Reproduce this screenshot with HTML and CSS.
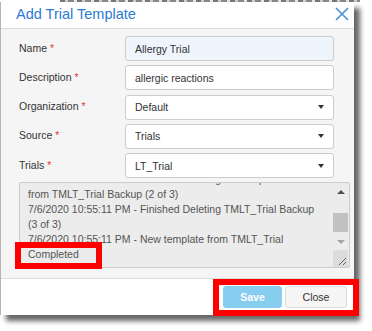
FILE: index.html
```html
<!DOCTYPE html>
<html lang="en">
<head>
    <meta charset="UTF-8">
    <title>Add Trial Template</title>
    <link rel="stylesheet" href="styles.css">
</head>
<body>
    <div class="bg-strip"></div>

    <!-- Dialog -->
    <div class="dialog">
        <div class="dialog-header">
            <h2>Add Trial Template</h2>
            <svg class="close-x" width="14" height="14" viewBox="0 0 14 14">
                <path d="M1 1 L13 13 M13 1 L1 13" stroke="#4a8fd8" stroke-width="1.6" fill="none"/>
            </svg>
        </div>

        <div class="dialog-body">
            <div class="form-grid">
                <label>Name <span class="req">*</span></label>
                <div class="field active">Allergy Trial</div>

                <label>Description <span class="req">*</span></label>
                <div class="field">allergic reactions</div>

                <label>Organization <span class="req">*</span></label>
                <div class="field select">Default <span class="caret"></span></div>

                <label>Source <span class="req">*</span></label>
                <div class="field select">Trials <span class="caret"></span></div>

                <label>Trials <span class="req">*</span></label>
                <div class="field select">LT_Trial <span class="caret"></span></div>
            </div>

            <!-- Progress log -->
            <div class="log-box">
                <div class="log-text">
                    <div>7/6/2020 10:55:11 PM - Finished Deleting the template</div>
                    <div>from TMLT_Trial Backup (2 of 3)</div>
                    <div>7/6/2020 10:55:11 PM - Finished Deleting TMLT_Trial Backup</div>
                    <div>(3 of 3)</div>
                    <div>7/6/2020 10:55:11 PM - New template from TMLT_Trial</div>
                    <div>Completed</div>
                </div>
                <div class="log-scroll">
                    <div class="sb-btn"><span class="arrow-up"></span></div>
                    <div class="sb-track"><div class="sb-thumb"></div></div>
                    <div class="sb-btn"><span class="arrow-down"></span></div>
                    <div class="sb-corner">
                        <svg width="15" height="17" viewBox="0 0 15 17">
                            <path d="M6 15 L13 8 M10 15 L13 12" stroke="#666" stroke-width="1" fill="none"/>
                        </svg>
                    </div>
                </div>
            </div>
        </div>

        <div class="dialog-footer">
            <button class="btn btn-save">Save</button>
            <button class="btn btn-close">Close</button>
        </div>
    </div>

    <!-- Annotation boxes -->
    <div class="mark mark-completed"></div>
    <div class="mark mark-buttons"></div>
</body>
</html>
```

FILE: styles.css
```css
/* Reset */
* {
    margin: 0;
    padding: 0;
    box-sizing: border-box;
}

body {
    font-family: "Liberation Sans", Arial, sans-serif;
    background-color: #fff;
    color: #333;
    width: 372px;
    height: 331px;
    overflow: hidden;
    position: relative;
}

.bg-strip {
    height: 2px;
    margin: 0 12px 0 60px;
    background: repeating-linear-gradient(90deg, #777 0 5px, #ccc 5px 8px, #888 8px 14px, #e5e5e5 14px 17px);
}

/* Dialog */
.dialog {
    width: 354px;
    background-color: #fff;
    border-left: 1px solid #b5b5b5;
    box-shadow: 6px 6px 5px rgba(0, 0, 0, 0.6);
}

.dialog-header {
    height: 27px;
    border-bottom: 1px solid #dcdcdc;
    display: flex;
    align-items: center;
    justify-content: space-between;
    padding: 0 5px 2px 15px;
}

.dialog-header h2 {
    font-size: 14.5px;
    font-weight: normal;
    color: #2a7bd1;
}

.dialog-body {
    background-color: #f5f5f5;
    padding: 7px 4px 10px 18px;
}

.form-grid {
    display: grid;
    grid-template-columns: 106px 209px;
    grid-auto-rows: 25px;
    row-gap: 4.25px;
}

.form-grid label {
    font-size: 10.5px;
    color: #333;
    display: flex;
    align-items: center;
    padding-bottom: 2px;
}

.req {
    color: #e53935;
    margin-left: 3px;
}

.field {
    background-color: #fff;
    border: 1px solid #ccc;
    border-radius: 3px;
    font-size: 10.5px;
    color: #333;
    padding: 0 9px;
    display: flex;
    align-items: center;
    justify-content: space-between;
}

.field.active {
    background-color: #eef5fd;
}

.caret {
    width: 0;
    height: 0;
    border-left: 3.5px solid transparent;
    border-right: 3.5px solid transparent;
    border-top: 4px solid #333;
}

/* Log box */
.log-box {
    margin-top: 4px;
    width: 331px;
    height: 86px;
    background-color: #ececec;
    border: 1px solid #ccc;
    border-radius: 2px;
    display: flex;
}

.log-text {
    flex: 1;
    overflow: hidden;
    padding-left: 8px;
    font-size: 10.5px;
    line-height: 15px;
    color: #555;
    white-space: nowrap;
}

.log-text div:first-child {
    margin-top: -11px;
}

.log-scroll {
    width: 15px;
    margin-right: 1px;
    display: flex;
    flex-direction: column;
}

.sb-btn {
    height: 16px;
    display: flex;
    align-items: center;
    justify-content: center;
}

.sb-btn:first-child {
    margin-top: 1px;
}

.arrow-up {
    border-left: 4px solid transparent;
    border-right: 4px solid transparent;
    border-bottom: 4px solid #505050;
}

.arrow-down {
    border-left: 4px solid transparent;
    border-right: 4px solid transparent;
    border-top: 4px solid #a3a3a3;
}

.sb-track {
    flex: 1;
    padding-top: 13px;
}

.sb-thumb {
    height: 19px;
    background-color: #c1c1c1;
}

.sb-corner {
    height: 17px;
    background-color: #dcdcdc;
}

.sb-corner svg {
    display: block;
}

/* Footer */
.dialog-footer {
    height: 37px;
    border-top: 1px solid #dcdcdc;
    display: flex;
    justify-content: flex-end;
    align-items: flex-start;
    gap: 3px;
    padding: 7px 7px 0 0;
}

.btn {
    height: 22px;
    border-radius: 3px;
    font-family: "Liberation Sans", Arial, sans-serif;
    font-size: 10.5px;
}

.btn-save {
    width: 59px;
    background-color: #87cdef;
    border: 1px solid #87cdef;
    color: #fff;
    font-weight: bold;
}

.btn-close {
    width: 62px;
    background-color: #f5f5f5;
    border: 1px solid #ddd;
    color: #333;
}

/* Red annotation boxes */
.mark {
    position: absolute;
    border: 6px solid #f00;
}

.mark-completed {
    left: 15px;
    top: 242px;
    width: 87px;
    height: 27px;
}

.mark-buttons {
    left: 213px;
    top: 279px;
    width: 146px;
    height: 37px;
}
```
